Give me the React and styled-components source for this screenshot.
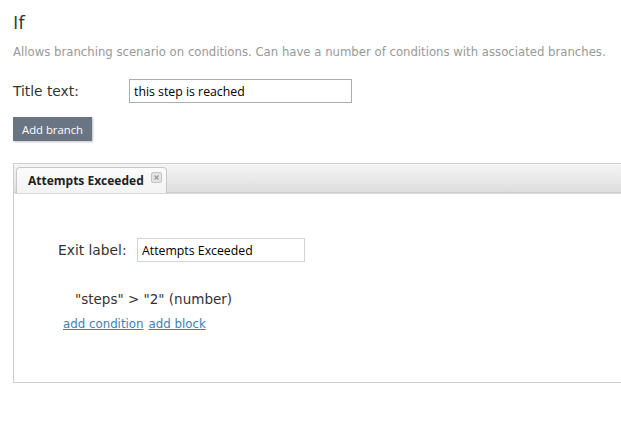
import React from "react";
import styled, { createGlobalStyle } from "styled-components";

const GlobalStyle = createGlobalStyle`
  html, body {
    margin: 0;
    padding: 0;
    background: #fff;
    overflow: hidden;
  }
`;

const textFont = `"DejaVu Sans", sans-serif`;
const formFont = `"Open Sans", sans-serif`;

const Page = styled.div`
  width: 621px;
  height: 427px;
  padding: 10px 0 0 13px;
  box-sizing: border-box;
  font-family: ${textFont};
  color: #333;
`;

const Heading = styled.h1`
  margin: 0;
  font-family: ${formFont};
  font-size: 19px;
  font-weight: 400;
  line-height: 24px;
  color: #333;
`;

const Description = styled.p`
  margin: 11px 0 0;
  font-family: ${textFont};
  font-size: 11.7px;
  line-height: 15px;
  color: #999;
  white-space: nowrap;
`;

const FieldRow = styled.div`
  display: flex;
  align-items: center;
  margin: ${(p) => p.$margin || "0"};
`;

const Label = styled.label`
  font-family: ${textFont};
  font-size: ${(p) => p.$size || 13.8}px;
  color: #333;
  width: ${(p) => p.$width}px;
  flex: none;
`;

const TextInput = styled.input`
  box-sizing: border-box;
  width: ${(p) => p.$width}px;
  height: 24px;
  border: 1px solid ${(p) => p.$border || "#a9adbb"};
  padding: 0 4px;
  font-family: ${formFont};
  font-size: 12.3px;
  color: #000;
  background: #fff;
  outline: none;
`;

const Button = styled.button`
  display: block;
  margin-top: 14px;
  height: 24px;
  padding: 0 9px;
  border: none;
  background: #6a7584;
  color: #fff;
  font-family: ${formFont};
  font-size: 11.3px;
  box-shadow: 1px 1px 2px rgba(0, 0, 0, 0.25);
`;

const Panel = styled.div`
  margin-top: 22px;
  margin-right: -10px;
  height: 220px;
  box-sizing: border-box;
  border: 1px solid #cfcfcf;
  border-right: none;
`;

const TabBar = styled.div`
  height: 29px;
  padding: 3px 0 0 2px;
  box-sizing: border-box;
  display: flex;
  align-items: flex-end;
  background: linear-gradient(#f5f5f5, #dedede);
  border-bottom: 1px solid #cfcfcf;
  box-shadow: 0 2px 0 -1px #d8d8d8;
`;

const Tab = styled.div`
  height: 26px;
  margin-bottom: -1px;
  box-sizing: border-box;
  display: flex;
  align-items: center;
  gap: 7px;
  padding: 0 4px 0 11px;
  border: 1px solid #c8c8c8;
  border-bottom: none;
  border-radius: 4px 4px 0 0;
  background: linear-gradient(#fbfbfb, #f3f3f3);
  font-family: ${formFont};
  font-size: 12px;
  font-weight: 700;
  color: #222;
`;

const CloseIcon = styled.span`
  width: 9px;
  height: 9px;
  margin-top: -6px;
  display: inline-flex;
  border: 1px solid #c4c4c4;
  border-radius: 2px;
  background: #e4e4e4;
  align-items: center;
  justify-content: center;
`;

const PanelBody = styled.div`
  padding: 45px 0 0 44px;
`;

const Condition = styled.div`
  margin: 29px 0 0 17px;
  font-family: ${textFont};
  font-size: 13.5px;
  color: #333;
`;

const Links = styled.div`
  display: flex;
  gap: 5px;
  margin: 10px 0 0 5px;
`;

const Link = styled.a`
  font-family: ${textFont};
  font-size: 11.8px;
  color: #3f7eb5;
  text-decoration: underline;
  cursor: pointer;
`;

function App() {
  return (
    <>
      <GlobalStyle />
      <Page>
        <Heading>If</Heading>
        <Description>
          Allows branching scenario on conditions. Can have a number of
          conditions with associated branches.
        </Description>
        <FieldRow $margin="19px 0 0">
          <Label $width={116}>Title text:</Label>
          <TextInput $width={223} defaultValue="this step is reached" />
        </FieldRow>
        <Button>Add branch</Button>
        <Panel>
          <TabBar>
            <Tab>
              Attempts Exceeded
              <CloseIcon>
                <svg width="7" height="7" viewBox="0 0 7 7">
                  <path
                    d="M1.5 1.5 L5.5 5.5 M5.5 1.5 L1.5 5.5"
                    stroke="#9a9a9a"
                    strokeWidth="1.2"
                  />
                </svg>
              </CloseIcon>
            </Tab>
          </TabBar>
          <PanelBody>
            <FieldRow>
              <Label $width={79}>Exit label:</Label>
              <TextInput
                $width={168}
                $border="#cfd3da"
                defaultValue="Attempts Exceeded"
              />
            </FieldRow>
            <Condition>"steps" &gt; "2" (number)</Condition>
            <Links>
              <Link>add condition</Link>
              <Link>add block</Link>
            </Links>
          </PanelBody>
        </Panel>
      </Page>
    </>
  );
}

export default App;
